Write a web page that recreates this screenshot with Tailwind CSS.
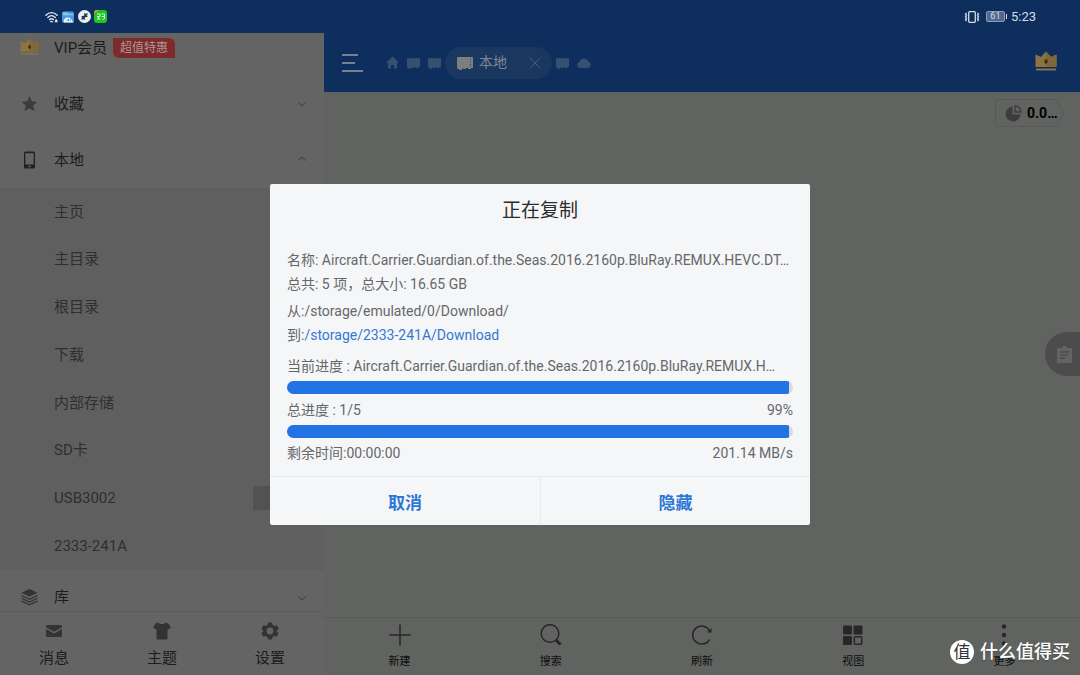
<!DOCTYPE html>
<html lang="zh-CN">
<head>
<meta charset="utf-8">
<meta name="viewport" content="width=device-width, initial-scale=1">
<title>正在复制</title>
<script src="https://cdn.jsdelivr.net/npm/@tailwindcss/browser@4"></script>
</head>
<body class="relative flex h-screen flex-col overflow-hidden bg-[#616361] font-['Roboto','Noto_Sans_CJK_SC',sans-serif] text-[15px] text-[#1c1c1c]">

<!-- shared icon shapes -->
<svg class="hidden" aria-hidden="true">
  <symbol id="crown" viewBox="0 0 22 20">
    <path d="M.5 3.500L6 6l5-5.500L16 6l5.500-2.500V16H.5z" fill="#8c7440"/>
    <path d="M11 .5L16 6l5.500-2.500V16H11z" fill="#806936"/>
    <path d="M1 17.500h20V19.500H1z" fill="#857450"/>
    <path d="M11 7.500l2 3-2 3-2-3z" fill="#3d2f14"/>
  </symbol>
  <symbol id="card" viewBox="0 0 16 14">
    <path d="M1 1h14a1 1 0 0 1 1 1v10h-2v1h-3v-1h-2v1H6v-.5H5V14H2v-1H1a1 1 0 0 1-1-1V2a1 1 0 0 1 1-1z" fill="currentColor"/>
  </symbol>
</svg>

<!-- status bar -->
<header class="flex h-[33px] shrink-0 items-center justify-between bg-[#0e2f5e] pr-11 pl-[45px] text-[#d5dbe5]">
  <div class="flex items-center gap-[3px]">
    <svg class="h-3 w-[14px]" viewBox="0 0 15 12" fill="none" stroke="#dfe5ee" stroke-width="1.500" stroke-linecap="round"><path d="M1 4.200C4.500.3 9.500.3 13 4.200M3 6.500c2.500-2.600 5.500-2.600 8 0M5 8.800c1.400-1.300 2.600-1.300 4 0"/><path d="M6 11h2M11 10.500l1-1.500 1 1.500M11 11h2" stroke-width="1.200"/></svg>
    <svg class="h-3 w-3" viewBox="0 0 13 12"><rect x="0" y="0" width="13" height="12" rx="2" fill="#4b9bdc"/><path d="M1 1h5l1 1.500h5V4H1z" fill="#8cc5ee"/><path d="M1.800 12a4.700 4.700 0 0 1 9.300-1.500A2 2 0 0 1 12.500 12z" fill="#eef6fc"/><path d="M5 10.500l2-2.500v2.500M9 8v2.500" stroke="#4b9bdc" fill="none"/></svg>
    <svg class="ml-px h-[13px] w-[13px]" viewBox="0 0 13 13"><circle cx="6.500" cy="6.500" r="6.500" fill="#eceff4"/><path d="M6.800 3v3.200l-3.300.6M6.200 10V6.800l3.300-.6M3.500 9.500l6-6" stroke="#1d3353" stroke-width="1.200" fill="none"/></svg>
    <svg class="h-[13px] w-[13px]" viewBox="0 0 13 13"><rect width="13" height="13" rx="3" fill="#1cc51f"/><path d="M0 3a3 3 0 0 1 3-3h2L0 4z" fill="#e08b54"/><path d="M3 4h3v2.500H3.500M3 6.500h3M3 9h3.500M4.500 6.500V9M7.500 4h3v4.500l-2 1M7.500 6.500h3" stroke="#d9f7d9" fill="none"/></svg>
  </div>
  <div class="flex items-center text-[13px]">
    <svg class="mr-[6px] h-3 w-4" viewBox="0 0 16 12" fill="none" stroke="#d5dbe5" stroke-width="1.300"><rect x="4.700" y=".7" width="6.600" height="10.600" rx="1"/><path d="M2.500 2l-1 1.300 1 1.400-1 1.400 1 1.300-1 1.400 1 1.200M13.500 2l1 1.300-1 1.400 1 1.400-1 1.300 1 1.400-1 1.200"/></svg>
    <span class="flex h-[11px] w-[19px] items-center justify-center rounded-[2px] border border-[#8b9cb6] bg-[#52698c] text-[9px] leading-none">61</span>
    <span class="mr-1 ml-px h-[5px] w-px bg-[#d5dbe5]"></span>
    <time>5:23</time>
  </div>
</header>

<div class="flex min-h-0 flex-1">
  <!-- drawer -->
  <aside class="flex w-[30%] shrink-0 flex-col bg-[#646464]">
    <a href="#" class="flex h-[43px] shrink-0 items-center pb-[13px] pl-5">
      <svg class="mr-[15px] mb-[3px] h-[17px] w-[19px]"><use href="#crown"/></svg>
      <span>VIP会员</span>
      <span class="ml-[6px] flex h-5 items-center rounded-tr-md rounded-bl-md bg-[#7d2a2c] px-[7px] text-[12px] text-[#a99]">超值特惠</span>
    </a>
    <button class="flex h-14 shrink-0 items-center pr-4 pl-5">
      <svg class="mr-[15px] h-5 w-[19px]" viewBox="0 0 19 20"><path d="M9.500 2l2.300 5.300 5.700.5-4.300 3.800 1.300 5.700-5-3-5 3 1.300-5.700L1.500 7.800l5.700-.5z" fill="#3c3c3c"/></svg>
      <span class="flex-1 text-left">收藏</span>
      <svg class="h-3 w-3" viewBox="0 0 12 12" fill="none" stroke="#4b4b4b" stroke-width="1.300"><path d="M2.500 4.500L6 8l3.500-3.500"/></svg>
    </button>
    <button class="flex h-14 shrink-0 items-center pr-4 pl-5">
      <svg class="mr-[15px] h-5 w-[19px]" viewBox="0 0 19 20"><path fill-rule="evenodd" d="M5.500 1.500h8a1.500 1.500 0 0 1 1.500 1.500v14a1.500 1.500 0 0 1-1.500 1.500h-8A1.500 1.500 0 0 1 4 17V3a1.500 1.500 0 0 1 1.500-1.500zM5.300 3.200v11.300h8.400V3.200zM8.300 15.800v1.400h2.400v-1.400z" fill="#202020"/></svg>
      <span class="flex-1 text-left">本地</span>
      <svg class="h-3 w-3" viewBox="0 0 12 12" fill="none" stroke="#4b4b4b" stroke-width="1.300"><path d="M2.500 6.500L6 3l3.500 3.500"/></svg>
    </button>
    <ul class="flex min-h-0 flex-1 flex-col bg-[#5f5f5f] text-[#2f2f2f]">
      <li class="flex flex-1 items-center pl-[54px]"><a href="#">主页</a></li>
      <li class="flex flex-1 items-center pl-[54px]"><a href="#">主目录</a></li>
      <li class="flex flex-1 items-center pl-[54px]"><a href="#">根目录</a></li>
      <li class="flex flex-1 items-center pl-[54px]"><a href="#">下载</a></li>
      <li class="flex flex-1 items-center pl-[54px]"><a href="#">内部存储</a></li>
      <li class="flex flex-1 items-center pl-[54px]"><a href="#">SD卡</a></li>
      <li class="flex flex-1 items-center justify-between pr-10 pl-[54px]"><a href="#">USB3002</a><span class="h-6 w-[31px] bg-[#525252]"></span></li>
      <li class="flex flex-1 items-center pl-[54px]"><a href="#">2333-241A</a></li>
    </ul>
    <button class="flex h-[41px] shrink-0 items-center pt-[14px] pr-4 pl-5">
      <svg class="mr-[15px] h-5 w-[19px]" viewBox="0 0 19 20"><path d="M9.500 1l8 3.700-8 3.800-8-3.800z" fill="#333"/><path d="M1.500 7.500l8 3.800 8-3.800M1.500 10.300l8 3.800 8-3.800M1.500 13.100l8 3.800 8-3.800" fill="none" stroke="#333" stroke-width="1.200"/></svg>
      <span class="flex-1 text-left">库</span>
      <svg class="h-3 w-3" viewBox="0 0 12 12" fill="none" stroke="#4b4b4b" stroke-width="1.300"><path d="M2.500 4.500L6 8l3.500-3.500"/></svg>
    </button>
    <nav class="grid h-16 shrink-0 grid-cols-3 border-t border-[#5c5c5c] leading-6">
      <button class="flex flex-col items-center gap-[5px] pt-[9px]">
        <svg class="h-5 w-5" viewBox="0 0 20 20"><path d="M3.500 4h13A1.500 1.500 0 0 1 18 5.500v.8l-8 4.500-8-4.500v-.8A1.500 1.500 0 0 1 3.500 4zM2 8l8 4.500L18 8v6.500a1.500 1.500 0 0 1-1.500 1.500h-13A1.500 1.500 0 0 1 2 14.500z" fill="#333"/></svg>
        <span>消息</span>
      </button>
      <button class="flex flex-col items-center gap-[5px] pt-[9px]">
        <svg class="h-5 w-5" viewBox="0 0 20 20"><path d="M6.500 1.500c1 2 6 2 7 0l3 1L19 6.500l-2.800 2L15.500 8v9.500a1 1 0 0 1-1 1h-9a1 1 0 0 1-1-1V8l-.7.5-2.800-2 2.500-4z" fill="#333"/></svg>
        <span>主题</span>
      </button>
      <button class="flex flex-col items-center gap-[5px] pt-[9px]">
        <svg class="h-5 w-5" viewBox="0 0 20 20"><path fill-rule="evenodd" d="M8 1.500h4l.6 2.400 1.700 1 2.400-.7 2 3.500-1.800 1.700v1.200l1.800 1.700-2 3.500-2.400-.7-1.700 1-.6 2.400H8l-.6-2.400-1.700-1-2.400.7-2-3.500 1.800-1.700V9.400L1.300 7.700l2-3.500 2.400.7 1.700-1zM10 6.600a3.400 3.400 0 1 0 0 6.800 3.400 3.400 0 0 0 0-6.800z" fill="#333"/></svg>
        <span>设置</span>
      </button>
    </nav>
  </aside>

  <!-- file area -->
  <main class="flex min-w-0 flex-1 flex-col">
    <div class="flex h-[59px] shrink-0 items-center bg-[#0e2f5e] pr-[23px] pl-[18px] text-[#38506f]">
      <button aria-label="菜单" class="mr-[23px] flex w-[21px] flex-col gap-[6px]">
        <span class="h-[2px] w-4 bg-[#76808c]"></span>
        <span class="h-[2px] w-[13px] bg-[#76808c]"></span>
        <span class="h-[2px] w-[21px] bg-[#76808c]"></span>
      </button>
      <svg class="h-[13px] w-[13px]" viewBox="0 0 13 13"><path d="M6.500.5l6 5.700-.6.800h-.9v5.500H8V9H5v3.500H2V7h-.9L.5 6.200z" fill="currentColor"/></svg>
      <svg class="ml-2 h-3 w-[13px]"><use href="#card"/></svg>
      <svg class="ml-2 h-3 w-[13px]"><use href="#card"/></svg>
      <div class="mx-1 flex h-8 w-[107px] items-center rounded-full bg-[#19375f] pr-[11px] pl-3 text-[14px] text-[#7f8791]">
        <svg class="mr-[6px] h-[14px] w-4 text-[#7d7f7f]" viewBox="0 0 16 14"><use href="#card"/><path d="M13.500 3v8" stroke="#434e5d" stroke-dasharray="1.500 1"/></svg>
        <span class="flex-1">本地</span>
        <button aria-label="关闭"><svg class="block h-3 w-3" viewBox="0 0 12 12"><path d="M.5.5l11 11M11.500.5l-11 11" stroke="#445a77"/></svg></button>
      </div>
      <svg class="h-3 w-[13px]"><use href="#card"/></svg>
      <svg class="ml-2 h-[11px] w-[14px]" viewBox="0 0 14 11"><path d="M3.500 11a3.300 3.300 0 0 1-.6-6.500 4.200 4.200 0 0 1 8-.2A3.400 3.400 0 0 1 10.500 11z" fill="currentColor"/></svg>
      <button aria-label="会员" class="mb-[3px] ml-auto"><svg class="block h-5 w-[22px]"><use href="#crown"/></svg></button>
    </div>
    <section class="flex min-h-0 flex-1 flex-col items-end">
      <button class="relative mt-[7px] mr-4 flex h-7 w-[69px] items-center pl-[10px] text-[14px] font-bold text-black">
        <svg class="absolute inset-0 h-full w-full" viewBox="0 0 69 28" fill="none" stroke="#575957"><path d="M3 .5h56q2 0 3 2l6 10q1 1.500 0 3l-6 10q-1 2-3 2H3q-2.500 0-2.500-2.500V3Q.5.5 3 .5z"/></svg>
        <svg class="mr-[5px] h-[17px] w-[17px]" viewBox="0 0 17 17"><path d="M7.500 1.500v8h8a7.500 7.500 0 1 1-8-8z" fill="#3c3d3c"/><path d="M10 1v6h6a6.200 6.200 0 0 0-6-6z" fill="none" stroke="#3c3d3c" stroke-width="1.300"/></svg>
        <span>0.0…</span>
      </button>
      <button aria-label="剪贴板" class="mt-[205px] flex h-11 w-[35px] items-center rounded-l-full bg-[#4b4c4b] pl-3">
        <svg class="h-[18px] w-[15px]" viewBox="0 0 15 18"><path d="M0 3h5l1-2h3l1 2h5v15H0z" fill="#626462"/><path d="M3 7h9M3 10h8M3 13h5" stroke="#4b4c4b" stroke-width="1.300"/></svg>
      </button>
    </section>
    <nav class="grid h-[58px] shrink-0 grid-cols-5 border-t border-[#585a58] text-[11px] leading-4 text-[#0c0d0c]">
      <button class="flex flex-col items-center gap-2 pt-[6px]">
        <svg class="h-[22px] w-[22px]" viewBox="0 0 22 22"><path d="M11 .5v21M.5 11h21" stroke="#262726" stroke-width="1.500"/></svg>
        <span>新建</span>
      </button>
      <button class="flex flex-col items-center gap-2 pt-[6px]">
        <svg class="h-[22px] w-[22px]" viewBox="0 0 22 22" fill="none" stroke="#262726"><circle cx="10" cy="9.500" r="8.800" stroke-width="1.500"/><path d="M16 16l4.500 4.500" stroke-width="2.800"/></svg>
        <span>搜索</span>
      </button>
      <button class="flex flex-col items-center gap-2 pt-[6px]">
        <svg class="h-[22px] w-[22px]" viewBox="0 0 22 22" fill="none" stroke="#262726" stroke-width="1.500"><path d="M18.500 15.500A9 9 0 1 1 18.500 6.500"/><path d="M20.500 4v4.500H16z" fill="#262726" stroke="none"/></svg>
        <span>刷新</span>
      </button>
      <button class="flex flex-col items-center gap-2 pt-[6px]">
        <svg class="h-[22px] w-[22px]" viewBox="0 0 22 22" fill="#262726"><rect x="1" y="1.500" width="9" height="9" rx="1"/><rect x="11.500" y="1.500" width="9" height="9" rx="1"/><rect x="1" y="12" width="9" height="9" rx="1"/><rect x="12.300" y="12.800" width="7.400" height="7.400" rx="1" fill="none" stroke="#262726" stroke-width="1.500"/></svg>
        <span>视图</span>
      </button>
      <button class="flex flex-col items-center gap-2 pt-[6px]">
        <svg class="h-[22px] w-[22px]" viewBox="0 0 22 22" fill="#262726"><circle cx="11" cy="2.500" r="2.200"/><circle cx="11" cy="11" r="2.200"/><circle cx="11" cy="19.500" r="2.200"/></svg>
        <span>更多</span>
      </button>
    </nav>
  </main>
</div>

<!-- copy progress dialog -->
<div class="absolute inset-0 flex items-center justify-center pt-[33px]">
  <div role="dialog" aria-labelledby="dialog-title" class="w-1/2 rounded-[2px] bg-[#f5f6f8] text-[14px] leading-6 text-[#666769]">
    <h1 id="dialog-title" class="pt-[13px] text-center text-[19px] leading-7 text-[#2b2c2e]">正在复制</h1>
    <div class="px-[17px] pt-[23px] pb-[11px]">
      <p class="truncate">名称: Aircraft.Carrier.Guardian.of.the.Seas.2016.2160p.BluRay.REMUX.HEVC.DT…</p>
      <p>总共: 5 项，总大小: 16.65 GB</p>
      <p class="mt-[3px]">从:/storage/emulated/0/Download/</p>
      <p>到:<a href="#" class="text-[#3478cf]">/storage/2333-241A/Download</a></p>
      <p class="mt-[7px] truncate">当前进度 : Aircraft.Carrier.Guardian.of.the.Seas.2016.2160p.BluRay.REMUX.H…</p>
      <div role="progressbar" aria-label="当前进度" aria-valuenow="99" class="mt-[3px] h-[13px] overflow-hidden rounded-full bg-[#d9dadd]"><div class="h-full bg-[#2273e4]" style="width:99.3%"></div></div>
      <p class="mt-[4px] flex justify-between"><span>总进度 : 1/5</span><span>99%</span></p>
      <div role="progressbar" aria-label="总进度" aria-valuenow="99" class="mt-[3px] h-[13px] overflow-hidden rounded-full bg-[#d9dadd]"><div class="h-full bg-[#2273e4]" style="width:99.2%"></div></div>
      <p class="mt-[3px] flex justify-between"><span>剩余时间:00:00:00</span><span>201.14 MB/s</span></p>
    </div>
    <div class="grid grid-cols-2 border-t border-[#e8e9eb] text-[17px] font-bold text-[#2d76d6]">
      <button class="h-12 pt-1">取消</button>
      <button class="h-12 border-l border-[#e8e9eb] pt-1">隐藏</button>
    </div>
  </div>
</div>

<!-- watermark -->
<div class="absolute right-[10px] bottom-[10px] flex items-center gap-[6px] text-[18px] leading-[26px] text-white">
  <span class="flex h-6 w-6 items-center justify-center rounded-full bg-white text-[17px] text-[#333]">值</span>
  <span class="font-medium text-shadow-sm">什么值得买</span>
</div>
</body>
</html>
